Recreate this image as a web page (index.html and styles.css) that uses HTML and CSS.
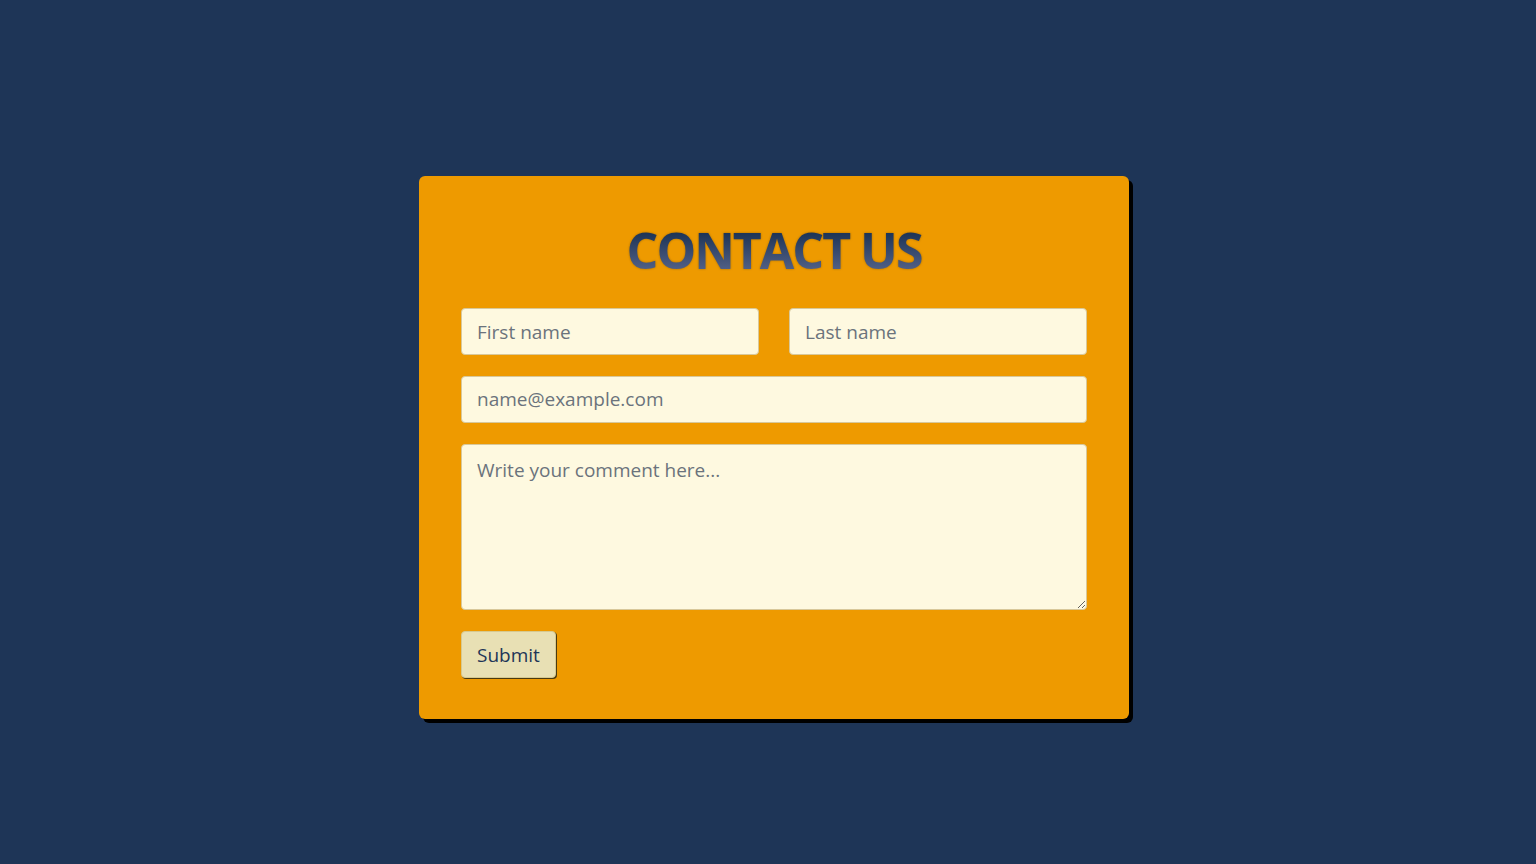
FILE: index.html
```html
<!DOCTYPE html>
<html>
<head>
<meta charset="utf-8">
<link rel="stylesheet" href="styles.css">
</head>
<body>
<main class="page">
  <form class="card">
    <h1 class="title">CONTACT US</h1>
    <div class="row">
      <input class="field" type="text" placeholder="First name">
      <input class="field" type="text" placeholder="Last name">
    </div>
    <input class="field" type="email" placeholder="name@example.com">
    <textarea class="field area" placeholder="Write your comment here..."></textarea>
    <div class="actions">
      <button class="btn" type="button">Submit</button>
    </div>
  </form>
</main>
</body>
</html>
```

FILE: styles.css
```css
* { box-sizing: border-box; }
html, body { margin: 0; height: 100%; }
body {
  background: #1e3557;
  font-family: "Open Sans", "Noto Sans", sans-serif;
}
.page {
  height: 100%;
  display: flex;
  justify-content: center;
  padding-top: 176px;
  padding-left: 12px;
}
.card {
  width: 710px;
  height: 543px;
  background: #ee9a00;
  border-radius: 6px;
  box-shadow: 4px 4px 0 #000;
  padding: 42px 42px 41px;
  display: flex;
  flex-direction: column;
  gap: 21px;
}
.title {
  margin: -1px 0 4px;
  text-align: center;
  font-size: 50px;
  line-height: 66px;
  font-weight: 700;
  letter-spacing: -2px;
  background: linear-gradient(180deg, #1e3557 25%, #56648a 85%);
  -webkit-background-clip: text;
  background-clip: text;
  color: transparent;
  filter: drop-shadow(0 0 1px rgba(120, 80, 0, 0.6));
}
.row {
  display: flex;
  gap: 30px;
}
.row .field { flex: 1; min-width: 0; }
.field {
  height: 47px;
  width: 100%;
  background: #fef9e0;
  border: 1px solid #d8c89a;
  border-radius: 4px;
  padding: 0 15px;
  font-family: "Open Sans", "Noto Sans", sans-serif;
  font-size: 19px;
  color: #333;
  outline: none;
}
.field::placeholder { color: #6b737c; }
.area {
  height: 167px;
  padding: 12px 15px;
  resize: vertical;
}
.actions { display: flex; }
.btn {
  height: 47px;
  padding: 0 15px;
  background: #e8e0b4;
  border: 1px solid #d6c98f;
  border-radius: 4px;
  box-shadow: 1px 1px 0 #4a3a10;
  font-family: "Open Sans", "Noto Sans", sans-serif;
  font-size: 19px;
  color: #1e3557;
}
```
